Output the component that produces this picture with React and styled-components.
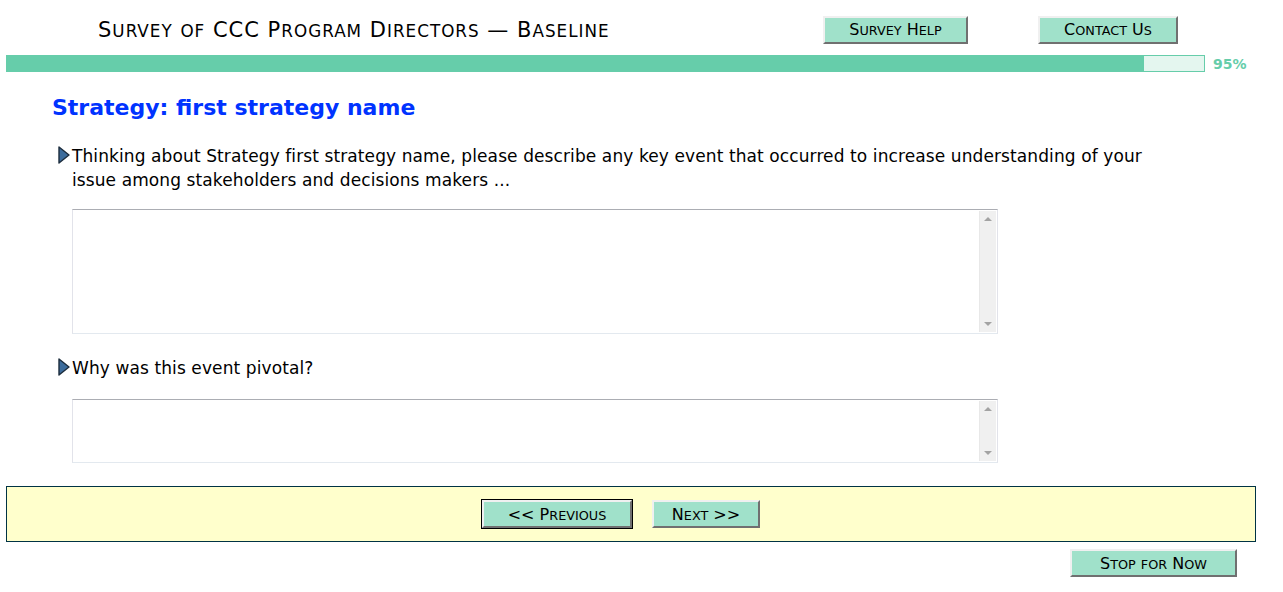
import React from "react"
import styled, { createGlobalStyle } from "styled-components"

const GlobalStyle = createGlobalStyle`
  body {
    margin: 0;
    background: #ffffff;
    font-family: Verdana, "DejaVu Sans", sans-serif;
    color: #000000;
  }
`

const Page = styled.div`
  width: 1250px;
  padding: 0 0 0 6px;
`

const Header = styled.div`
  display: flex;
  align-items: center;
  height: 55px;
  padding-top: 4px;
  box-sizing: border-box;
`

const Title = styled.h1`
  margin: 0 0 0 92px;
  width: 725px;
  font-size: 21px;
  font-weight: normal;
  letter-spacing: 1px;
  white-space: nowrap;
`

const Small = styled.span`
  font-size: 0.8em;
`

// lowercase letters become uppercase at a smaller size, like a small-caps face
const SmallCaps = ({ children }) => {
  const runs = []
  let buf = ""
  let lower = null
  for (const ch of children) {
    const isLower = ch !== ch.toUpperCase()
    if (lower !== null && isLower !== lower) {
      runs.push({ text: buf, lower })
      buf = ""
    }
    buf += ch
    lower = isLower
  }
  if (buf) runs.push({ text: buf, lower })
  return runs.map((r, i) =>
    r.lower ? <Small key={i}>{r.text.toUpperCase()}</Small> : <React.Fragment key={i}>{r.text}</React.Fragment>
  )
}

const Button = styled.button`
  font-family: Verdana, "DejaVu Sans", sans-serif;
  font-size: 16px;
  color: #000;
  background: #a0e1ca;
  height: ${p => p.$h || 28}px;
  width: ${p => p.$w}px;
  padding: 0;
  border: 2px solid;
  border-color: #f0f0f0 #707070 #707070 #f0f0f0;
  outline: ${p => (p.$focus ? "1px solid #000" : "none")};
  outline-offset: 0;
  margin-left: ${p => p.$ml || 0}px;
  cursor: pointer;
`

const ProgressRow = styled.div`
  display: flex;
  align-items: center;
  height: 17px;
`

const Track = styled.div`
  width: 1197px;
  height: 15px;
  border: 1px solid #66cdaa;
  background: #e4f6ef;
`

const Fill = styled.div`
  height: 100%;
  background: #66cdaa;
`

const Percent = styled.span`
  margin-left: 8px;
  font-size: 14px;
  font-weight: bold;
  color: #66cdaa;
`

const Content = styled.div`
  padding-left: 46px;
`

const Heading = styled.h2`
  margin: 23px 0 24px 0;
  font-size: 22px;
  font-weight: bold;
  color: #0033ff;
`

const Question = styled.div`
  display: flex;
  align-items: flex-start;
  padding-left: 6px;
  width: 1100px;
  margin-top: ${p => p.$mt || 0}px;
`

const Prompt = styled.p`
  margin: 0;
  font-size: 17px;
  line-height: 24px;
  letter-spacing: 0.1px;
`

const Arrow = styled.svg`
  flex: none;
  width: 12px;
  height: 18px;
  margin-top: 2px;
  margin-right: 2px;
`

const Field = styled.div`
  display: flex;
  margin: ${p => p.$mt}px 0 0 20px;
  width: 926px;
  height: ${p => p.$h}px;
  box-sizing: border-box;
  border: 1px solid;
  border-color: #abadb3 #e2e3ea #e3e9ef #e2e3ea;
  background: #fff;
`

const Box = styled.textarea`
  flex: 1;
  border: none;
  outline: none;
  resize: none;
  overflow: hidden;
  padding: 2px;
  font-family: Verdana, "DejaVu Sans", sans-serif;
  font-size: 14px;
`

const Rail = styled.div`
  flex: none;
  width: 17px;
  margin: 1px 1px 1px 0;
  background: #f0f0f0;
  border-left: 1px solid #e8e8e8;
  display: flex;
  flex-direction: column;
  justify-content: space-between;
  align-items: center;
  padding: 6px 0;
  box-sizing: border-box;
`

const Tri = styled.span`
  width: 0;
  height: 0;
  border-left: 4px solid transparent;
  border-right: 4px solid transparent;
  ${p => (p.$down ? "border-top: 4px solid #a3a3a3;" : "border-bottom: 4px solid #a3a3a3;")}
`

const TextField = ({ mt, h }) => (
  <Field $mt={mt} $h={h}>
    <Box />
    <Rail>
      <Tri />
      <Tri $down />
    </Rail>
  </Field>
)

const NavBar = styled.div`
  display: flex;
  justify-content: center;
  align-items: center;
  gap: 20px;
  margin-top: 23px;
  height: 56px;
  width: 1250px;
  padding-right: 20px;
  box-sizing: border-box;
  border: 1px solid #003344;
  background: #ffffcc;
`

const Footer = styled.div`
  display: flex;
  justify-content: flex-end;
  width: 1231px;
  padding-top: 7px;
`

const Marker = () => (
  <Arrow viewBox="0 0 12 18">
    <polygon points="1,1 11,9 1,17" fill="#3c6c9c" stroke="#1c2c3c" strokeWidth="1.4" strokeLinejoin="round" />
  </Arrow>
)

const App = () => {
  const progress = 95
  return (
    <Page>
      <GlobalStyle />
      <Header>
        <Title>
          <SmallCaps>Survey of CCC Program Directors — Baseline</SmallCaps>
        </Title>
        <Button $w={145}>
          <SmallCaps>Survey Help</SmallCaps>
        </Button>
        <Button $w={140} $ml={70}>
          <SmallCaps>Contact Us</SmallCaps>
        </Button>
      </Header>
      <ProgressRow>
        <Track>
          <Fill style={{ width: `${progress}%` }} />
        </Track>
        <Percent>{progress}%</Percent>
      </ProgressRow>
      <Content>
        <Heading>Strategy: first strategy name</Heading>
        <Question>
          <Marker />
          <Prompt>
            Thinking about Strategy first strategy name, please describe any key event that occurred to increase
            understanding of your issue among stakeholders and decisions makers ...
          </Prompt>
        </Question>
        <TextField mt={17} h={125} />
        <Question $mt={22}>
          <Marker />
          <Prompt>Why was this event pivotal?</Prompt>
        </Question>
        <TextField mt={19} h={64} />
      </Content>
      <NavBar>
        <Button $w={150} $focus>
          <SmallCaps>{"<< Previous"}</SmallCaps>
        </Button>
        <Button $w={108}>
          <SmallCaps>{"Next >>"}</SmallCaps>
        </Button>
      </NavBar>
      <Footer>
        <Button $w={167} $h={28}>
          <SmallCaps>Stop for Now</SmallCaps>
        </Button>
      </Footer>
    </Page>
  )
}

export default App
